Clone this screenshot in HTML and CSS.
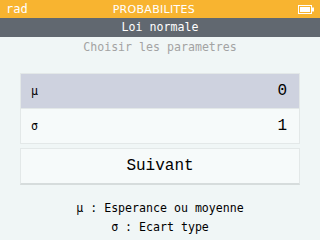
FILE: index.html
```html
<!DOCTYPE html>
<html>
<head>
<meta charset="utf-8">
<title>Probabilites</title>
<link rel="stylesheet" href="styles.css">
</head>
<body>
<div id="screen">
  <div class="topbar">
    <span class="angle">rad</span>
    <span class="appname">PROBABILITES</span>
    <svg class="battery" width="16" height="9" viewBox="0 0 16 9">
      <rect x="0.5" y="0.5" width="13" height="8" fill="none" stroke="#fff"/>
      <rect x="2" y="2" width="10" height="5" fill="#fff"/>
      <rect x="14" y="2.5" width="2" height="4" fill="#fff"/>
    </svg>
  </div>
  <div class="titlebar">Loi normale</div>
  <div class="content">
    <div class="hint">Choisir les parametres</div>
    <div class="params">
      <div class="row selected">
        <span class="name">μ</span>
        <span class="value">0</span>
      </div>
      <div class="row">
        <span class="name">σ</span>
        <span class="value">1</span>
      </div>
    </div>
    <div class="btn">Suivant</div>
    <div class="legend">
      <div>μ : Esperance ou moyenne</div>
      <div>σ : Ecart type</div>
    </div>
  </div>
</div>
</body>
</html>
```

FILE: styles.css
```css
html,body {
  margin: 0px;
  padding: 0px;
  width: 100%;
  height: 100%;
  overflow: hidden;
}
#screen {
  width: 320px;
  height: 240px;
  background: #f0f6f6;
  font-family: "DejaVu Sans Mono", "Liberation Mono", monospace;
  font-size: 11.6px;
  color: #000;
  display: flex;
  flex-direction: column;
}
.topbar {
  height: 18px;
  background: #f8b430;
  color: #fff;
  display: flex;
  align-items: center;
  padding: 0 6px;
  box-sizing: border-box;
}
.topbar .angle {
  font-size: 12px;
}
.topbar .appname {
  flex: 1;
  text-align: center;
  font-family: "DejaVu Sans", "Liberation Sans", sans-serif;
  font-size: 11px;
  padding-right: 18px;
  letter-spacing: 0.3px;
}
.topbar .battery {
  display: block;
}
.titlebar {
  height: 19px;
  line-height: 19px;
  background: #616870;
  color: #fff;
  text-align: center;
}
.content {
  flex: 1;
  display: flex;
  flex-direction: column;
}
.hint {
  color: #a3a3a3;
  text-align: center;
  height: 20px;
  line-height: 20px;
  margin-bottom: 16px;
}
.params {
  margin: 0 20px;
  border: 1px solid #e3e8e8;
  display: flex;
  flex-direction: column;
}
.row {
  height: 34px;
  display: flex;
  align-items: center;
  justify-content: space-between;
  padding: 0 12px 0 10px;
  background: #f6fafa;
}
.row + .row {
  border-top: 1px solid #e3e8e8;
}
.row.selected {
  background: #ced2df;
}
.row .value {
  font-family: "Liberation Mono", monospace;
  font-size: 16px;
}
.btn {
  margin: 4px 20px 0;
  height: 34px;
  line-height: 34px;
  text-align: center;
  font-family: "Liberation Mono", monospace;
  font-size: 16px;
  background: #f6fafa;
  border: 1px solid #e3e8e8;
  border-bottom: 2px solid #d6dcdc;
}
.legend {
  margin-top: 14px;
  text-align: center;
  line-height: 19px;
}
```
